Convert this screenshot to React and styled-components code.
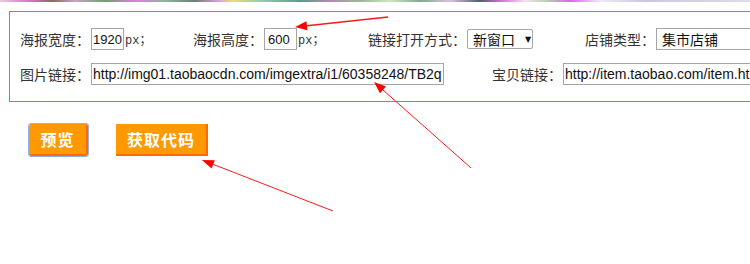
import React from "react";
import styled, { createGlobalStyle } from "styled-components";

const GlobalStyle = createGlobalStyle`
  html, body {
    margin: 0;
    padding: 0;
    background: #fff;
    overflow: hidden;
  }
  body {
    font-family: "Noto Sans CJK SC", "Liberation Sans", sans-serif;
  }
`;

const Page = styled.div`
  position: relative;
  width: 750px;
  height: 264px;
  overflow: hidden;
`;

// leftover pixels of the image above, cut off at the top
const Strip = styled.div`
  height: 2px;
  background: linear-gradient(
    90deg,
    #e9c9e0 0%, #d96fd0 4%, #8c6b58 7%, #c9a3c8 10%, #6da36f 14%,
    #e07de0 18%, #8fb59a 22%, #6f7d74 26%, #d6a0d8 29%, #e8e070 31%,
    #8fcab0 35%, #5f9b86 40%, #b28ab0 44%, #9ab89a 48%, #cfe6c0 52%,
    #7cae8e 56%, #d9c0de 60%, #506070 64%, #e070e0 67%, #f4e0f0 70%,
    #b8d0a8 73%, #e060f0 76%, #f0e8f8 80%, #c8c8e0 86%, #dcdcec 100%
  );
`;

const Panel = styled.div`
  margin: 9px 0 0 9px;
  width: 800px;
  border: 1px solid #ff6600;
  padding: 16px 0 16px 10px;
  display: flex;
  flex-direction: column;
  gap: 13px;
`;

const Row = styled.div`
  display: flex;
  align-items: center;
  height: 22px;
`;

const Field = styled.div`
  display: flex;
  align-items: center;
  flex: 0 0 ${({ w }) => (w ? `${w}px` : "auto")};
`;

const Label = styled.span`
  font-size: 14px;
  color: #333;
  white-space: nowrap;
  margin-right: 1px;
`;

const Input = styled.input`
  box-sizing: border-box;
  width: ${({ w }) => w}px;
  height: 22px;
  margin: 0;
  border: 1px solid #a6a6a6;
  border-radius: 0;
  padding: 0 ${({ pad }) => (pad === undefined ? 1 : pad)}px;
  font-family: ${({ cjk }) =>
    cjk ? `"Noto Sans CJK SC", sans-serif` : `"Liberation Sans", Arial, sans-serif`};
  font-size: ${({ small }) => (small ? 13 : 14)}px;
  color: #111;
  background: #fff;
  outline: none;
`;

const Unit = styled.span`
  font-family: "Liberation Mono", "Noto Sans CJK SC", monospace;
  font-size: 12px;
  color: #333;
  margin-left: 1px;
`;

const Select = styled.div`
  box-sizing: border-box;
  width: 66px;
  height: 20px;
  border: 1px solid #a6a6a6;
  border-radius: 2px;
  display: flex;
  align-items: center;
  padding: 0 0 0 5px;
  font-size: 14px;
  color: #111;
`;

const Caret = styled.span`
  margin-left: 10px;
  font-family: "DejaVu Sans", sans-serif;
  font-size: 8px;
  color: #111;
`;

const Actions = styled.div`
  display: flex;
  align-items: center;
  gap: 28px;
  margin: 22px 0 0 29px;
`;

const Button = styled.button`
  box-sizing: border-box;
  height: 32px;
  width: ${({ w }) => w}px;
  background: #ff9900;
  border: 0;
  border-right: 2px solid #ff6a00;
  border-bottom: 2px solid #ff6a00;
  color: #fff;
  font-family: "Noto Sans CJK SC", sans-serif;
  font-weight: bold;
  font-size: 16px;
  letter-spacing: 1px;
  padding: 0;
  outline: ${({ focused }) => (focused ? "1px solid #8fb2ec" : "none")};
  outline-offset: 0;
  border-radius: ${({ focused }) => (focused ? "2px" : "0")};
`;

const Overlay = styled.svg`
  position: absolute;
  left: 0;
  top: 0;
  pointer-events: none;
`;

const Arrow = ({ x1, y1, x2, y2, width = 1 }) => {
  const a = Math.atan2(y2 - y1, x2 - x1);
  const len = 12;
  const half = 4.5;
  const bx = x2 - len * Math.cos(a);
  const by = y2 - len * Math.sin(a);
  const px = -Math.sin(a) * half;
  const py = Math.cos(a) * half;
  return (
    <g>
      <line x1={x1} y1={y1} x2={bx} y2={by} stroke="#ff1a1a" strokeWidth={width} />
      <polygon
        points={`${x2},${y2} ${bx + px},${by + py} ${bx - px},${by - py}`}
        fill="#ff0000"
      />
    </g>
  );
};

const App = () => {
  return (
    <>
      <GlobalStyle />
      <Page>
        <Strip />
        <Panel>
          <Row>
            <Field w={173}>
              <Label>海报宽度：</Label>
              <Input w={33} pad={1} small defaultValue="1920" />
              <Unit>px；</Unit>
            </Field>
            <Field w={175}>
              <Label>海报高度：</Label>
              <Input w={33} pad={3} small defaultValue="600" />
              <Unit>px；</Unit>
            </Field>
            <Field w={217}>
              <Label>链接打开方式：</Label>
              <Select>
                新窗口<Caret>▼</Caret>
              </Select>
            </Field>
            <Field>
              <Label>店铺类型：</Label>
              <Input w={140} pad={5} cjk defaultValue="集市店铺" />
            </Field>
          </Row>
          <Row>
            <Field w={472}>
              <Label>图片链接：</Label>
              <Input
                w={353}
                defaultValue="http://img01.taobaocdn.com/imgextra/i1/60358248/TB2qvoDbXXXXXXXX"
              />
            </Field>
            <Field>
              <Label>宝贝链接：</Label>
              <Input w={220} defaultValue="http://item.taobao.com/item.htm?id=" />
            </Field>
          </Row>
        </Panel>
        <Actions>
          <Button w={59} focused>预览</Button>
          <Button w={92}>获取代码</Button>
        </Actions>
        <Overlay width="750" height="264">
          <Arrow x1={388} y1={17} x2={295} y2={27} width={1.6} />
          <Arrow x1={471} y1={168} x2={374} y2={82} />
          <Arrow x1={333} y1={211} x2={202} y2={160} />
        </Overlay>
      </Page>
    </>
  );
};

export default App;
